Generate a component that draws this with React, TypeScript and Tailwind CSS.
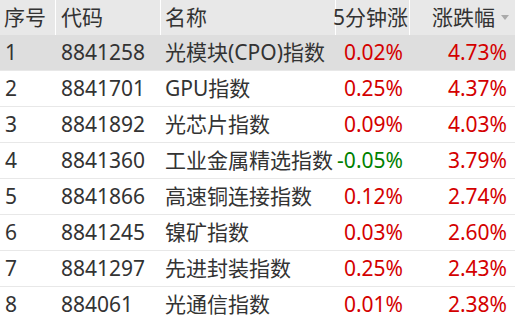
const rows = [
  { no: 1, code: '8841258', name: '光模块(CPO)指数', m5: '0.02%', chg: '4.73%' },
  { no: 2, code: '8841701', name: 'GPU指数', m5: '0.25%', chg: '4.37%' },
  { no: 3, code: '8841892', name: '光芯片指数', m5: '0.09%', chg: '4.03%' },
  { no: 4, code: '8841360', name: '工业金属精选指数', m5: '-0.05%', chg: '3.79%' },
  { no: 5, code: '8841866', name: '高速铜连接指数', m5: '0.12%', chg: '2.74%' },
  { no: 6, code: '8841245', name: '镍矿指数', m5: '0.03%', chg: '2.60%' },
  { no: 7, code: '8841297', name: '先进封装指数', m5: '0.25%', chg: '2.43%' },
  { no: 8, code: '884061', name: '光通信指数', m5: '0.01%', chg: '2.38%' },
]

const cols = 'grid grid-cols-[55px_105px_175px_74px_1fr]'

export default function App() {
  return (
    <div
      className="w-[515px] h-[322px] overflow-hidden bg-white text-[#333333] text-[21px] leading-none"
      style={{ fontFamily: '"Noto Sans", "Noto Sans CJK SC", sans-serif' }}
    >
      {/* Header */}
      <div className={`${cols} h-[35px] bg-[#e8e8e8] items-center`}>
        <div className="pl-[4px]">序号</div>
        <div className="h-full flex items-center border-l border-white pl-[5px]">代码</div>
        <div className="h-full flex items-center border-l border-white pl-[4px]">名称</div>
        <div className="h-full flex items-center justify-end border-l border-white pr-[1px] whitespace-nowrap">5分钟涨</div>
        <div className="h-full flex items-center justify-end border-l border-white pr-[6px] gap-[6px]">
          <span>涨跌幅</span>
          <span className="w-0 h-0 border-l-[4px] border-r-[4px] border-t-[5px] border-l-transparent border-r-transparent border-t-[#aaaaaa]" />
        </div>
      </div>

      {/* Rows */}
      {rows.map((r, i) => (
        <div
          key={r.no}
          className={`${cols} h-[36px] items-center border-b border-[#e8e8e8] ${i === 0 ? 'bg-[#dedede]' : ''}`}
        >
          <div className="pl-[5px]">{r.no}</div>
          <div className="pl-[6px]">{r.code}</div>
          <div className="pl-[5px] whitespace-nowrap">{r.name}</div>
          <div
            className={`text-right pr-[6px] whitespace-nowrap ${r.m5.startsWith('-') ? 'text-[#008000]' : 'text-[#d40000]'}`}
          >
            {r.m5}
          </div>
          <div className="text-right pr-[8px] text-[#d40000]">{r.chg}</div>
        </div>
      ))}
    </div>
  )
}
